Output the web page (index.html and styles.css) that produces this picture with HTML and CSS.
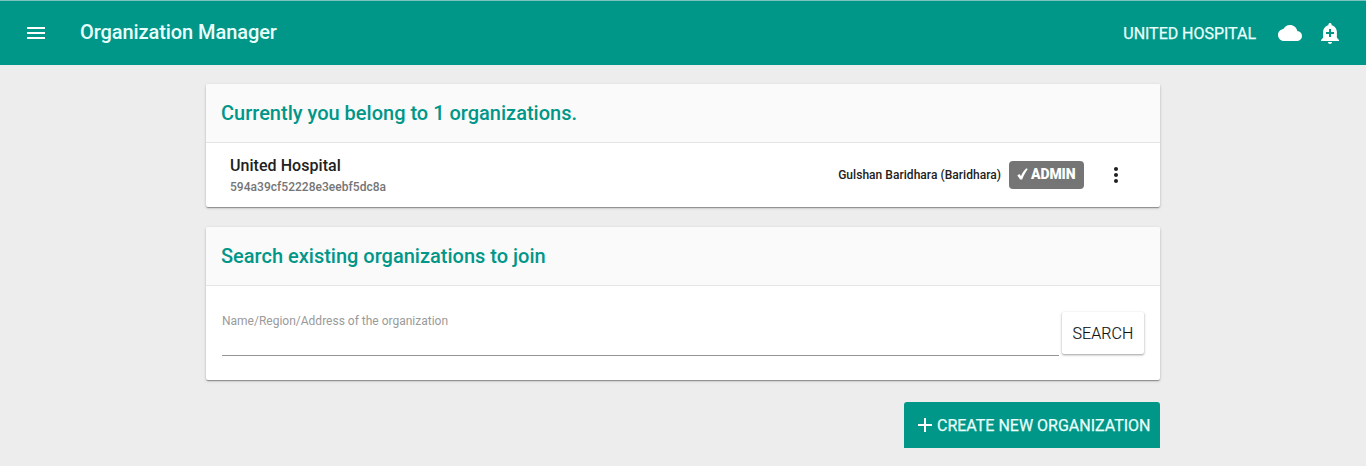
FILE: index.html
```html
<!DOCTYPE html>
<html lang="en">
<head>
<meta charset="utf-8">
<title>Organization Manager</title>
<link rel="stylesheet" href="styles.css">
</head>
<body>
<header class="toolbar">
  <svg class="icon" viewBox="0 0 24 24"><path d="M3 18h18v-2H3v2zm0-5h18v-2H3v2zm0-7v2h18V6H3z"/></svg>
  <h1 class="toolbar-title">Organization Manager</h1>
  <span class="toolbar-org">UNITED HOSPITAL</span>
  <svg class="icon" viewBox="0 0 24 24"><path d="M19.35 10.04C18.67 6.59 15.64 4 12 4 9.11 4 6.6 5.64 5.35 8.04 2.34 8.36 0 10.91 0 14c0 3.31 2.69 6 6 6h13c2.76 0 5-2.24 5-5 0-2.64-2.05-4.78-4.65-4.96z"/></svg>
  <svg class="icon icon-alert" viewBox="0 0 24 24"><path d="M10.01 21.01c0 1.1.89 1.99 1.99 1.99s1.99-.89 1.99-1.99h-3.98zm8.87-4.19V11c0-3.25-2.25-5.97-5.29-6.69v-.72C13.59 2.71 12.88 2 12 2s-1.59.71-1.59 1.59v.72C7.37 5.03 5.12 7.75 5.12 11v5.82L3 18.94V20h18v-1.06l-2.12-2.12zM16 13.01h-3v3h-2v-3H8V11h3V8h2v3h3v2.01z"/></svg>
</header>
<main class="content">
  <section class="card">
    <h2 class="card-title">Currently you belong to 1 organizations.</h2>
    <div class="org-row">
      <div class="org-info">
        <div class="org-name">United Hospital</div>
        <div class="org-id">594a39cf52228e3eebf5dc8a</div>
      </div>
      <span class="org-address">Gulshan Baridhara (Baridhara)</span>
      <span class="badge"><svg class="badge-check" viewBox="0 0 11 12"><path d="M.3 7.4 2.300 6l1.700 2C5.300 5 7 2.400 9.400.3l1.300.6C8.600 4 6.600 7.400 5.100 11.500H3.200z"/></svg>ADMIN</span>
      <svg class="icon icon-more" viewBox="0 0 24 24"><path d="M12 8c1.100 0 2-.9 2-2s-.9-2-2-2-2 .9-2 2 .9 2 2 2zm0 2c-1.100 0-2 .9-2 2s.9 2 2 2 2-.9 2-2-.9-2-2-2zm0 6c-1.100 0-2 .9-2 2s.9 2 2 2 2-.9 2-2-.9-2-2-2z"/></svg>
    </div>
  </section>
  <section class="card">
    <h2 class="card-title">Search existing organizations to join</h2>
    <form class="search-row">
      <label class="field">
        <span class="field-label">Name/Region/Address of the organization</span>
        <input class="field-input" type="text">
      </label>
      <button class="search-button" type="button">SEARCH</button>
    </form>
  </section>
  <button class="create-button" type="button">
    <svg class="create-plus" viewBox="0 0 14 14"><path d="M6 0h2v6h6v2H8v6H6V8H0V6h6z"/></svg><span class="create-label">CREATE NEW ORGANIZATION</span>
  </button>
</main>
</body>
</html>
```

FILE: styles.css
```css
* { box-sizing: border-box; }
body {
  margin: 0;
  height: 466px;
  background: #ededed;
  font-family: Roboto, "Liberation Sans", sans-serif;
  color: #212121;
}
.toolbar {
  display: flex;
  align-items: center;
  height: 65px;
  padding: 0 24px;
  border-top: 1px solid #7fc4bc;
  background: #009688;
  color: #e9fffb;
}
.icon { flex: none; width: 24px; height: 24px; fill: #fff; }
.toolbar-title {
  flex: 1;
  margin: 0 0 2px 32px;
  font-size: 20px;
  font-weight: 500;
  letter-spacing: -.08px;
  line-height: 24px;
}
.toolbar-org {
  margin-right: 22px;
  padding-top: 2px;
  font-size: 16px;
  font-weight: 400;
  -webkit-text-stroke: .25px;
  letter-spacing: -.03px;
  line-height: 20px;
}
.icon-alert { margin-left: 16px; }
.content {
  display: flex;
  flex-direction: column;
  width: 954px;
  margin: 19px auto 0;
}
.card {
  margin-bottom: 20px;
  border-radius: 2px;
  background: #fff;
  box-shadow: 0 1px 3px rgba(0,0,0,.22), 0 1px 1px rgba(0,0,0,.16), 0 2px 1px -1px rgba(0,0,0,.18);
}
.card-title {
  height: 59px;
  margin: 0;
  padding: 0 15px;
  border-bottom: 1px solid #e5e5e5;
  border-radius: 2px 2px 0 0;
  background: #fafafa;
  color: #009688;
  font-size: 20px;
  font-weight: 500;
  line-height: 58px;
}
.org-row { display: flex; align-items: center; height: 64px; padding: 0 32px 0 24px; }
.org-info { flex: 1; padding-top: 2px; }
.org-name { font-size: 16px; font-weight: 500; letter-spacing: .05px; line-height: 22px; }
.org-id { color: #757575; font-size: 12px; font-weight: 500; letter-spacing: .03px; line-height: 20px; }
.org-address { font-size: 12px; font-weight: 500; letter-spacing: .04px; }
.badge {
  display: flex;
  align-items: center;
  width: 75px;
  height: 28px;
  margin: 0 20px 0 8px;
  padding: 0 0 2px 8px;
  border-radius: 4px;
  background: #757575;
  color: #fff;
  font-size: 14px;
  font-weight: 900;
  letter-spacing: -.1px;
}
.badge-check { width: 11px; height: 12px; margin-right: 3px; fill: #fff; }
.icon-more { fill: #212121; }
.search-row { display: flex; height: 94px; padding: 26px 16px 0; }
.field { display: flex; flex: 1; flex-direction: column; height: 44px; margin-right: 3px; border-bottom: 1px solid #949494; }
.field-label { color: #9a9a9a; font-size: 12px; line-height: 18px; }
.field-input { width: 100%; height: 25px; padding: 0; border: 0; outline: 0; background: transparent; }
.search-button {
  width: 82px;
  height: 42px;
  padding: 2px 0 0;
  border: 0;
  border-radius: 2px;
  background: #fff;
  box-shadow: 0 1px 3px rgba(0,0,0,.22), 0 1px 2px rgba(0,0,0,.2);
  color: #111;
  font: 300 16px/40px Roboto, sans-serif;
  -webkit-text-stroke: .15px;
  letter-spacing: .1px;
}
.create-button {
  display: flex;
  align-items: center;
  align-self: flex-end;
  width: 256px;
  height: 46px;
  margin-top: 2px;
  padding: 0 0 0 14px;
  border: 0;
  border-radius: 3px 3px 0 0;
  background: #009688;
  color: #e9fffb;
  font: 400 16px/20px Roboto, sans-serif;
  -webkit-text-stroke: .25px;
  white-space: nowrap;
}
.create-label { padding-top: 2px; }
.create-plus { width: 14px; height: 14px; margin-right: 5px; fill: #fff; }
```
